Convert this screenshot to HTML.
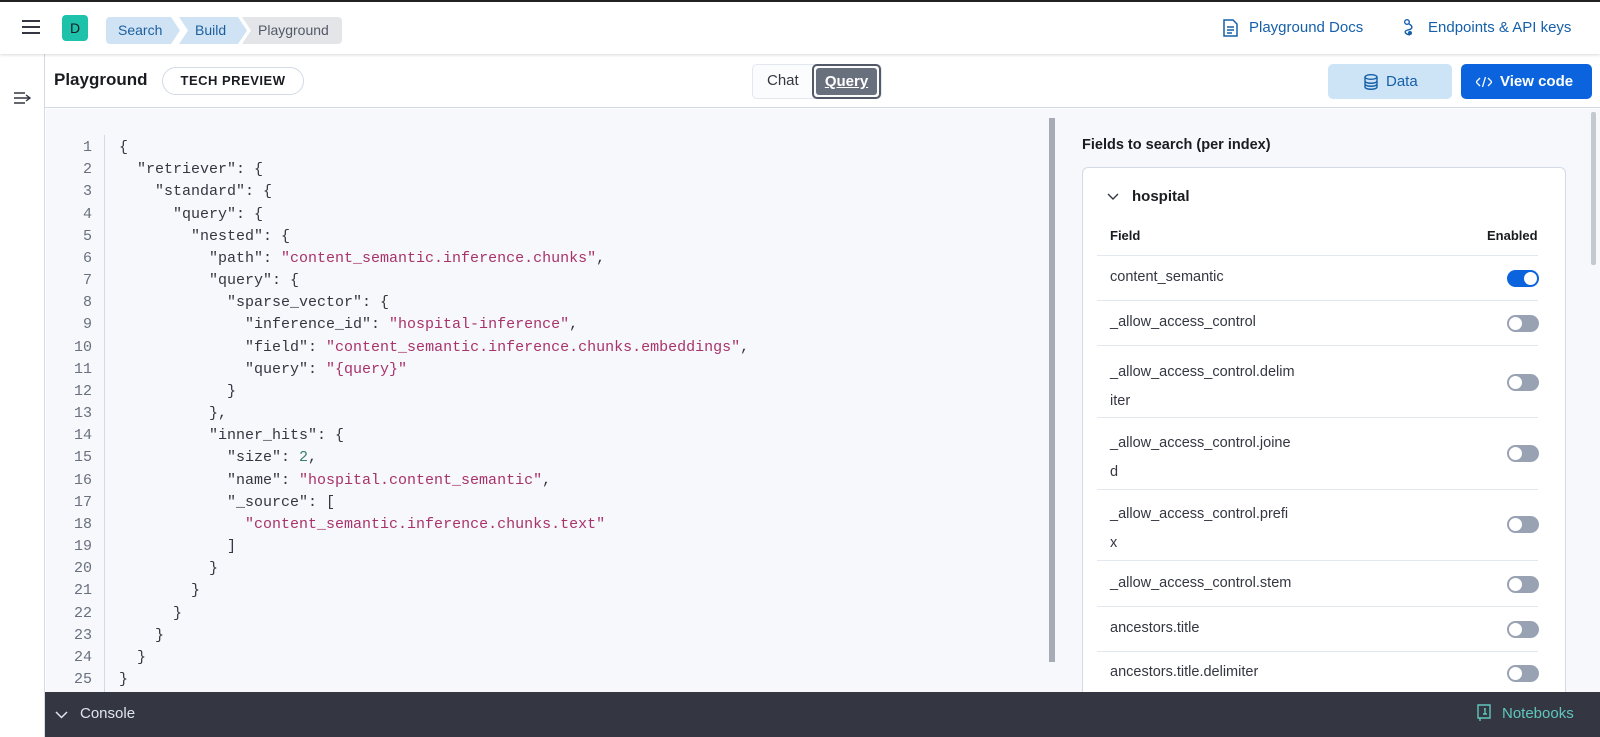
<!DOCTYPE html>
<html><head><meta charset="utf-8"><style>
*{box-sizing:border-box;margin:0;padding:0}
body{width:1600px;height:737px;overflow:hidden;font-family:"Liberation Sans",sans-serif;background:#fff;position:relative;color:#1a1c21}
.abs{position:absolute}
.top{left:0;top:0;width:1600px;height:54px;background:#fff;border-top:2px solid #222;box-shadow:0 1px 3px rgba(0,0,0,.15);z-index:3}
.crumb{top:15px;height:27px;font-size:14px;line-height:27px;color:#1d5f9d;background:#cfe3f5}
.link{top:17px;font-size:15px;color:#1660a9}
.side{left:0;top:54px;width:45px;height:683px;background:#fff;border-right:1px solid #d3dae6}
.tb{left:45px;top:54px;width:1555px;height:54px;background:#fff;border-bottom:1px solid #d3dae6}
.ed{left:46px;top:109px;width:1014px;height:583px;background:#f7f8fc}
.code{font-family:"Liberation Mono",monospace;font-size:15px;line-height:22.17px;white-space:pre;color:#343741}
.s{color:#a8336b}.n{color:#387e6c}
.rp{left:1060px;top:109px;width:540px;height:583px;background:#f7f8fc}
.card{left:1082px;top:167px;width:484px;height:540px;background:#fff;border:1px solid #d3dae6;border-radius:6px}
.row{left:1104px;width:427px;font-size:14.5px;color:#343741}
.div{left:1097px;width:441px;height:1px;background:#e3e8f0}
.tg{left:1507px;width:32px;height:17px;border-radius:9px;background:#98a2b3}
.tg::after{content:"";position:absolute;left:2px;top:2px;width:13px;height:13px;border-radius:50%;background:#fff}
.tg.on{background:#0b64dd}.tg.on::after{left:17px}
.con{left:45px;top:692px;width:1555px;height:45px;background:#343741}
</style></head><body>
<div class="abs top">
 <svg class="abs" style="left:22px;top:18px" width="18" height="14"><path d="M0 1h18M0 7h18M0 13h18" stroke="#343741" stroke-width="2"/></svg>
 <div class="abs" style="left:62px;top:13px;width:26px;height:26px;border-radius:4px;background:#1ec1a9;font-size:14px;line-height:26px;text-align:center">D</div>
 <div class="abs crumb" style="left:106px;width:74px;padding-left:12px;border-radius:4px 0 0 4px;clip-path:polygon(0 0,calc(100% - 9px) 0,100% 50%,calc(100% - 9px) 100%,0 100%)">Search</div>
 <div class="abs crumb" style="left:179px;width:68px;padding-left:16px;clip-path:polygon(0 0,calc(100% - 9px) 0,100% 50%,calc(100% - 9px) 100%,0 100%,9px 50%)">Build</div>
 <div class="abs crumb" style="left:242px;width:100px;padding-left:16px;background:#e3e5e9;color:#535966;border-radius:0 4px 4px 0;clip-path:polygon(0 0,100% 0,100% 100%,0 100%,9px 50%)">Playground</div>
 <svg class="abs" style="left:1223px;top:17px" width="15" height="18"><path d="M1 1h9l4 4v12H1z M4 8h7M4 11h7M4 14h5" fill="none" stroke="#1660a9" stroke-width="1.5"/></svg>
 <div class="abs link" style="left:1249px">Playground Docs</div>
 <svg class="abs" style="left:1403px;top:17px" width="12" height="18"><circle cx="4" cy="3" r="2.3" fill="none" stroke="#1660a9" stroke-width="1.4"/><path d="M6 5c4 2 4 5-1 6s-3 4 2 5" fill="none" stroke="#1660a9" stroke-width="1.4"/><circle cx="7" cy="14" r="2" fill="#1660a9"/></svg>
 <div class="abs link" style="left:1428px">Endpoints &amp; API keys</div>
</div>
<div class="abs side"><svg class="abs" style="left:14px;top:38px" width="18" height="12"><path d="M0 1h11M0 6h15M0 11h11M12 3l4 3-4 3" fill="none" stroke="#343741" stroke-width="1.4"/></svg></div>
<div class="abs tb">
 <div class="abs" style="left:9px;top:16px;font-size:17px;font-weight:bold">Playground</div>
 <div class="abs" style="left:117px;top:13px;width:142px;height:28px;border:1px solid #d3dae6;border-radius:14px;font-size:13px;font-weight:bold;line-height:26px;text-align:center;letter-spacing:.5px">TECH PREVIEW</div>
 <div class="abs" style="left:707px;top:10px;width:130px;height:35px;border:1px solid #e3e8f0;border-radius:5px;background:#fbfcfd"></div>
 <div class="abs" style="left:722px;top:18px;font-size:15px;color:#343741">Chat</div>
 <div class="abs" style="left:767px;top:10px;width:69px;height:35px;border:2px solid #535966;border-radius:5px;padding:2px"><div style="width:100%;height:100%;background:#69707d;border-radius:3px;color:#fff;font-size:15px;font-weight:bold;text-decoration:underline;text-align:center;line-height:27px">Query</div></div>
 <div class="abs" style="left:1283px;top:10px;width:124px;height:35px;background:#cce4f5;border-radius:5px;color:#1660a9;font-size:15px;line-height:35px"><svg class="abs" style="left:36px;top:10px" width="14" height="16"><ellipse cx="7" cy="3" rx="6" ry="2.3" fill="none" stroke="#1660a9" stroke-width="1.4"/><path d="M1 3v10c0 3 12 3 12 0V3M1 7c0 3 12 3 12 0M1 10c0 3 12 3 12 0" fill="none" stroke="#1660a9" stroke-width="1.4"/></svg><span class="abs" style="left:58px">Data</span></div>
 <div class="abs" style="left:1416px;top:10px;width:131px;height:35px;background:#0b64dd;border-radius:5px;color:#fff;font-size:15px;font-weight:bold;line-height:35px"><svg class="abs" style="left:15px;top:12px" width="16" height="12"><path d="M4 2L0 6l4 4M12 2l4 4-4 4M9.5 1L6.5 11" fill="none" stroke="#fff" stroke-width="1.3"/></svg><span class="abs" style="left:39px">View code</span></div>
</div>
<div class="abs ed">
 <div class="abs code" style="left:10px;top:28px;width:36px;text-align:right;color:#69707d">1
2
3
4
5
6
7
8
9
10
11
12
13
14
15
16
17
18
19
20
21
22
23
24
25</div>
 <div class="abs" style="left:58px;top:26px;width:1px;height:560px;background:#d3dae6"></div>
 <div class="abs code" style="left:73px;top:28px">{
  "retriever": {
    "standard": {
      "query": {
        "nested": {
          "path": <span class="s">"content_semantic.inference.chunks"</span>,
          "query": {
            "sparse_vector": {
              "inference_id": <span class="s">"hospital-inference"</span>,
              "field": <span class="s">"content_semantic.inference.chunks.embeddings"</span>,
              "query": <span class="s">"{query}"</span>
            }
          },
          "inner_hits": {
            "size": <span class="n">2</span>,
            "name": <span class="s">"hospital.content_semantic"</span>,
            "_source": [
              <span class="s">"content_semantic.inference.chunks.text"</span>
            ]
          }
        }
      }
    }
  }
}</div>
 <div class="abs" style="left:1003px;top:9px;width:6px;height:544px;background:#a6abb5"></div>
</div>
<div class="abs rp">
 <div class="abs" style="left:22px;top:28px;font-size:14.5px;font-weight:bold">Fields to search (per index)</div>
 <div class="abs" style="left:531px;top:3px;width:5px;height:153px;background:#c4c8cf;border-radius:2px"></div>
</div>
<div class="abs card"></div>
<svg class="abs" style="left:1107px;top:193px" width="12" height="8"><path d="M1 1l5 5 5-5" fill="none" stroke="#343741" stroke-width="1.4"/></svg>
<div class="abs" style="left:1132px;top:188px;font-size:15px;font-weight:bold">hospital</div>
<div class="abs" style="left:1110px;top:228px;font-size:13px;font-weight:bold">Field</div>
<div class="abs" style="left:1487px;top:228px;font-size:13px;font-weight:bold">Enabled</div>
<div class="abs div" style="top:255px"></div>
<div class="abs row" style="top:269px;left:1110px">content_semantic</div><div class="abs tg on" style="top:270px"></div>
<div class="abs div" style="top:300px"></div>
<div class="abs row" style="top:314px;left:1110px">_allow_access_control</div><div class="abs tg" style="top:315px"></div>
<div class="abs div" style="top:345px"></div>
<div class="abs row" style="top:358px;left:1110px;line-height:29px">_allow_access_control.delim<br>iter</div><div class="abs tg" style="top:374px"></div>
<div class="abs div" style="top:417px"></div>
<div class="abs row" style="top:429px;left:1110px;line-height:29px">_allow_access_control.joine<br>d</div><div class="abs tg" style="top:445px"></div>
<div class="abs div" style="top:489px"></div>
<div class="abs row" style="top:500px;left:1110px;line-height:29px">_allow_access_control.prefi<br>x</div><div class="abs tg" style="top:516px"></div>
<div class="abs div" style="top:560px"></div>
<div class="abs row" style="top:575px;left:1110px">_allow_access_control.stem</div><div class="abs tg" style="top:576px"></div>
<div class="abs div" style="top:606px"></div>
<div class="abs row" style="top:620px;left:1110px">ancestors.title</div><div class="abs tg" style="top:621px"></div>
<div class="abs div" style="top:651px"></div>
<div class="abs row" style="top:664px;left:1110px">ancestors.title.delimiter</div><div class="abs tg" style="top:665px"></div>
<div class="abs con">
 <svg class="abs" style="left:10px;top:19px" width="13" height="8"><path d="M1 1l5.5 5.5L12 1" fill="none" stroke="#dfe5ef" stroke-width="1.5"/></svg>
 <div class="abs" style="left:35px;top:13px;color:#dfe5ef;font-size:15px">Console</div>
 <svg class="abs" style="left:1432px;top:12px" width="14" height="18"><path d="M1 1h12v13H1z M3 14v3M8 4v6M7 5h1M6 10h4" fill="none" stroke="#5fc7be" stroke-width="1.4"/></svg>
 <div class="abs" style="left:1457px;top:13px;color:#5fc7be;font-size:15px">Notebooks</div>
</div>
</body></html>
